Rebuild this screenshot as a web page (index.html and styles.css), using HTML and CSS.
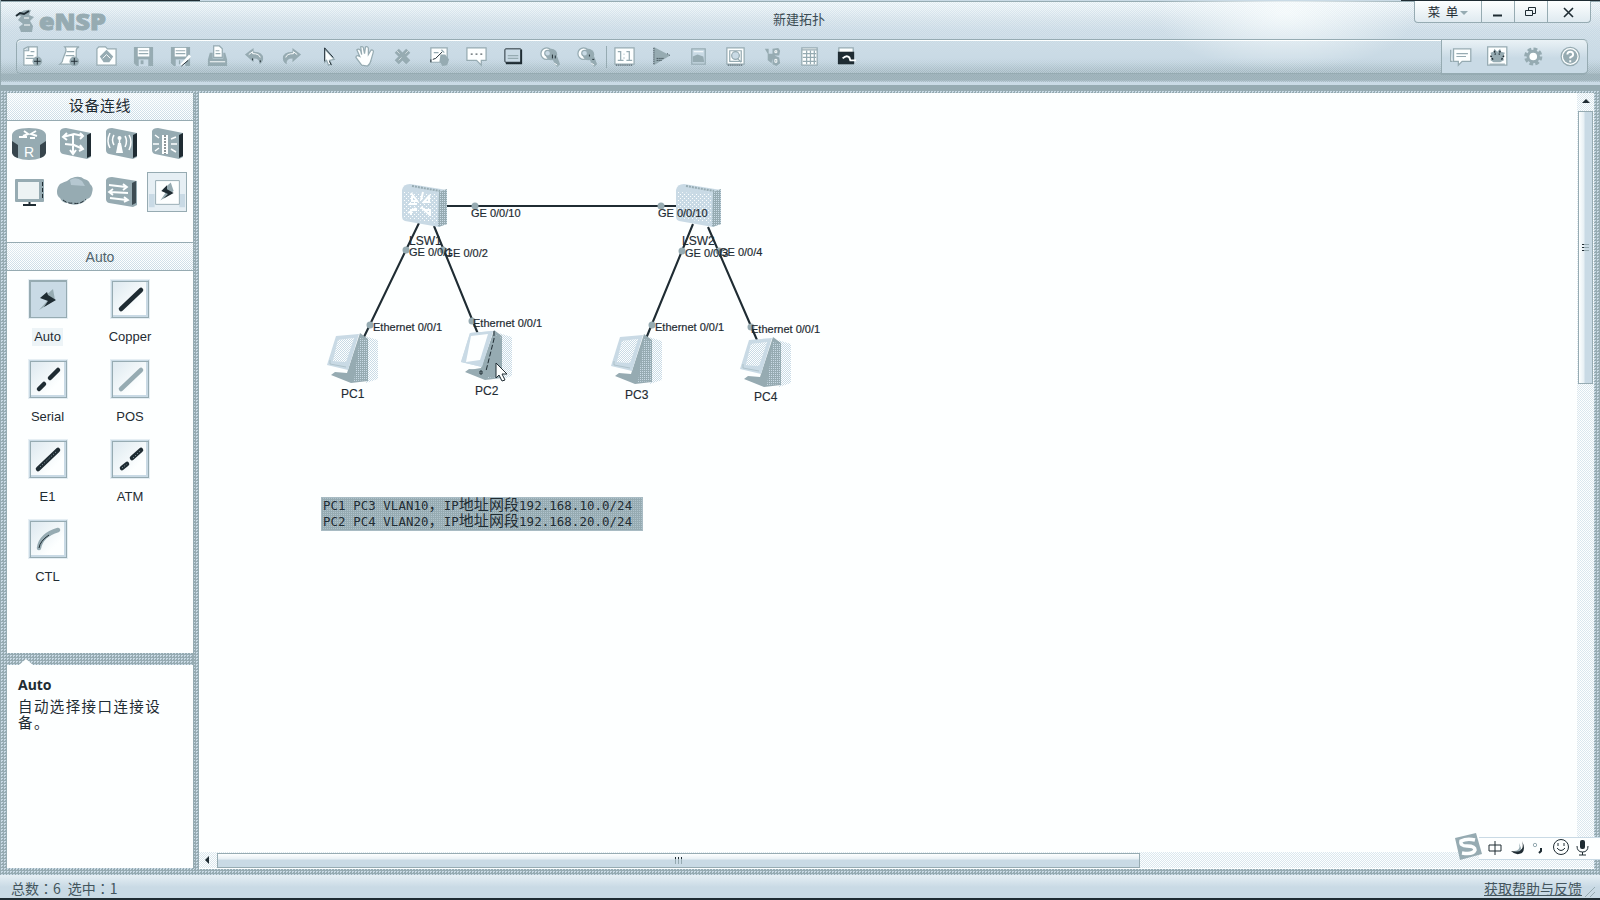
FILE: index.html
```html
<!DOCTYPE html>
<html lang="zh-CN">
<head>
<meta charset="utf-8">
<title>eNSP</title>
<link rel="stylesheet" href="styles.css">
</head>
<body>
<div class="app">
  <header class="header">
    <div class="titlebar">
      <svg class="logo" width="100" height="30" viewBox="0 0 100 30">
        <path class="m" d="M4 7q6-4 12-3l-2 5 5 2-4 4 3 5-1 6H6l-2-5 4-3-5-4 3-4-4-1z"/>
        <path class="lw" d="M9 12h5M9 19h6"/>
        <path class="ds" d="M1 10l4-3 4 1 5-3" stroke-width="2"/>
        <text x="24" y="24" textLength="67" lengthAdjust="spacingAndGlyphs">eNSP</text>
      </svg>
      <div class="title">新建拓扑</div>
      <div class="winctl">
        <div class="wc menu">菜&nbsp; 单<i class="caret"></i></div>
        <div class="wc"><svg width="14" height="14"><path class="ds" d="M2 10.500h9" stroke-width="2"/></svg></div>
        <div class="wc"><svg width="14" height="14"><path class="ds" d="M4.500 5.500v-3h7v6h-3M1.500 5.500h7v5h-7z"/></svg></div>
        <div class="wc last"><svg width="14" height="14"><path class="ds" d="M2 3l9 9M11 3l-9 9" stroke-width="1.600"/></svg></div>
      </div>
    </div>
    <div class="toolbar">
      <div class="tools">
        <svg viewBox="0 0 24 24"><path class="ms wf" d="M3 21V4l4-2h10v19zM3 6h5V2M6 11h7M5 14h9M10 7h4"/><circle class="m" cx="17" cy="17" r="5"/><path class="ds" d="M13.500 17h7M17 13.500v7"/></svg>
        <svg viewBox="0 0 24 24"><path class="ms wf" d="M7 2h15q-3 1-3 4v14H2q3-2 3-5l3-8q1-3-1-5zM9 7h8M8 11h9"/><circle class="m" cx="17" cy="17" r="5"/><path class="ds" d="M13.500 17h7M17 13.500v7"/></svg>
        <svg viewBox="0 0 24 24"><path class="ms wf" d="M2 4l2-2h7l2 2h9v17H2z"/><path class="m" d="M12 5l7 7-4 6H9l-4-6z"/><path class="lw" d="M8 14l4-4 4 4"/></svg>
        <svg viewBox="0 0 24 24"><path class="m" d="M2 2h20v20H5l-3-3z"/><path class="w" d="M6 3h12v9H6z"/><path class="l" d="M7 15h10v7H7z"/><path class="ms" d="M7 6h10M7 9h10"/><path class="m" d="M9 16h3v4H9z"/></svg>
        <svg viewBox="0 0 24 24"><path class="m" d="M2 2h20v20H5l-3-3z"/><path class="w" d="M6 3h12v9H6z"/><path class="l" d="M7 15h10v7H7z"/><path class="ms" d="M7 6h10M7 9h10M11 16v4"/><path d="M22 11l-9 10" stroke="#fdffff" stroke-width="3"/><path class="ds" d="M20 16l-7 6"/></svg>
        <svg viewBox="0 0 24 24"><path class="ms wf" d="M8 1h6l3 3v9H8zM10 6h4M10 9h5"/><path class="m" d="M4 8h3v6h11V8h2l2 7v7H2v-7z"/><path class="lw" d="M4 17.500h16"/></svg>
        <svg viewBox="0 0 24 24"><path class="m" d="M2 10l9-7v4q10 0 10 7 0 4-4 6 1-6-6-6v4z"/><path class="lw" d="M6 10l4-3v2q7 0 8 4"/><path class="ds" d="M10 14v2M18 16v2"/></svg>
        <svg viewBox="0 0 24 24"><path class="m" d="M22 10l-9-7v4Q3 7 3 14q0 4 4 6-1-6 6-6v4z"/><path class="lw" d="M18 10l-4-3v2q-7 0-8 4"/></svg>
        <svg viewBox="0 0 24 24"><path class="ms wf" d="M8 4l10 11-5 1 2 4-3 1-2-5-2 2z"/><path class="ds" d="M8 17V3l9 10M13 17l2 4"/></svg>
        <svg viewBox="0 0 24 24"><path class="ms wf" d="M8 21l-6-8q0-3 4-1L3 5q2-2 4 1l1 4-1-8q3-1 3 2l1 5 1-7q3-1 3 2v6l3-5q3 0 2 3l-2 7q-1 5-4 7z"/></svg>
        <svg viewBox="0 0 24 24"><path d="M6 6l12 12M18 6L6 18" stroke="#96abb2" stroke-width="6"/><path class="lw" d="M6 6l3 3M18 6l-3 3M8 16l3-3" opacity=".6"/></svg>
        <svg viewBox="0 0 24 24"><path class="ms wf" d="M3 3h17v15H3z"/><path class="m" d="M13 10h5l4 5-2 6-5 1-3-5z"/><path class="ds" d="M5 15l3-1 7-7M3 15v3"/><path class="ms" stroke-width="2" d="M6 8h5M14 5l3 3"/></svg>
        <svg viewBox="0 0 24 24"><path class="ms wf" d="M2 3h20v13h-5v5l-5-5H2z"/><path class="ds" d="M6 9.500h2M11 9.500h2M16 9.500h2"/></svg>
        <svg viewBox="0 0 24 24"><rect class="l dst" x="3" y="4" width="17" height="14" rx="1"/><path class="dk" d="M19 5h2v15H4v-2h15z"/><path class="ms" d="M6 11h11M6 14h11"/></svg>
        <svg viewBox="0 0 24 24"><circle class="ms wf" cx="8" cy="9" r="6"/><circle class="m" cx="13" cy="10" r="6"/><circle class="ms lf" cx="9" cy="8.500" r="3"/><path class="m" d="M13 12h6l3 8-3 3-3-4z"/><path class="lw" d="M16 19l3 2"/><path class="ds" d="M14 10v4M17 11v3"/></svg>
        <svg viewBox="0 0 24 24"><circle class="ms wf" cx="8" cy="9" r="6"/><circle class="m" cx="13" cy="10" r="6"/><circle class="ms lf" cx="9" cy="8.500" r="3"/><path class="m" d="M13 12h6l3 8-3 3-3-4z"/><path class="lw" d="M16 19l3 2"/><path class="ds" d="M14 10v2M17 15h2"/></svg>
        <svg class="sep" viewBox="0 0 24 24"><path class="ms wf" d="M2 3h20v17H2z"/><path class="ms" stroke-width="2" d="M5 7h3v9M5 16h6M14 7h3v9M14 16h6M11.500 9v1M11.500 13v1"/><path class="ds" stroke-dasharray="1 1" d="M3 21h18"/></svg>
        <svg viewBox="0 0 24 24"><path class="m" d="M4 2l17 9L4 21z"/><path class="ds" stroke-dasharray="1 1" d="M4 3v18M7 16h6M7 14h8M18 9l3 2"/></svg>
        <svg viewBox="0 0 24 24"><path class="ms lf" d="M5 4h14v16H5z"/><path class="m" d="M6 12l5-2 6 2 1 6H6z"/><path class="lw" d="M7 7h10"/></svg>
        <svg viewBox="0 0 24 24"><path class="ms wf" d="M3 3h18v17H3z"/><path class="ms" d="M6 6h12v11H6z"/><circle class="ms lf" cx="12" cy="11" r="4"/><path class="ms" stroke-width="2" d="M14 14l4 4"/><path class="ds" stroke-dasharray="1 1" d="M4 21h16"/></svg>
        <svg viewBox="0 0 24 24"><path class="m" d="M4 4h4v5h4V4l6-1 2 3-1 5h-5l5 2 1 6-4 3-4-2v-6l-1 5-4-3V9z"/><path class="lw" d="M14.500 6h2v2h-2zM14.500 15h2v3h-2z"/></svg>
        <svg viewBox="0 0 24 24"><path class="ms wf" d="M4 3h16v18H4z"/><path class="ms" d="M4 5h16M5 9h14M5 13h14M5 17h14M9 6v14M13 6v14M17 6v14"/></svg>
        <svg viewBox="0 0 24 24"><path class="ms wf" d="M4 3h15v17H4z"/><path class="dk" d="M3 7h17v13H3z"/><path d="M8 14q4-4 7-1l1 3h6" stroke="#fdffff" stroke-width="2"/></svg>
      </div>
      <div class="tools help">
        <svg viewBox="0 0 24 24"><path class="ms wf" d="M2 5v12h2M5 4h18v13H14l-4 4v-4H5zM8 9h12M8 12h10"/></svg>
        <svg viewBox="0 0 24 24"><path class="ms wf" d="M2 2h20v19H2z"/><path class="m" d="M5 8l3-1 1-3 3 3 3-3 1 3 4 1-2 4 1 4-4 2H8l-3-2 1-4z"/><path class="ds" stroke-width="1.500" stroke-dasharray="2 1" d="M5 11l3 5M9 6l1 4M15 6l-1 4M19 11l-3 5"/><path class="ms" stroke-width="2" d="M4 20h16"/></svg>
        <svg viewBox="0 0 24 24"><circle cx="12" cy="12" r="7" stroke="#96abb2" stroke-width="5" stroke-dasharray="3.500 2" fill="none"/><circle cx="12" cy="12" r="5.500" stroke="#96abb2" stroke-width="3" fill="#fdffff"/></svg>
        <svg viewBox="0 0 24 24"><circle class="ms wf" cx="12" cy="12" r="9.500"/><circle class="m" cx="12" cy="12" r="7.500"/><path d="M9 10q0-3 3-3t3 3q0 2-3 3v1M12 16v2" stroke="#fdffff" stroke-width="2"/></svg>
      </div>
    </div>
  </header>

  <main class="main">
    <aside class="side">
      <section class="palette">
        <h2 class="head cn">设备连线</h2>
        <div class="devices">
          <svg viewBox="0 0 40 40"><path class="m" d="M3 12Q4 5 20 5t17 7v18q-3 7-17 7T3 30z"/><path class="dk" d="M3 18l6 4v13q-5-1-6-5zM37 18l-6 4v13q5-1 6-5z" opacity=".8"/><path class="lw" stroke-width="2" d="M15 8l4 3-5 2M27 8l-5 3 6 2M10 14h8M21 15h5"/><text class="rl" x="15" y="34">R</text></svg>
          <svg viewBox="0 0 40 40"><path class="m" d="M5 8q1-3 6-3l25 5v24l-4 2-24-5q-3-1-3-4z"/><path class="dk" d="M32 12l4-2v23l-4 2z"/><path class="lw" stroke-width="2" d="M8 14l11-3 9 2M18 12v18M10 21l9 1 9 4M12 10l-4 4 4 3M25 10l3 3-3 3M15 27l3 4 3-4M25 22l3 4-4 2"/></svg>
          <svg viewBox="0 0 40 40"><path class="m" d="M5 8q1-3 6-3l25 5v24l-4 2-24-5q-3-1-3-4z"/><path class="dk" d="M32 12l4-2v23l-4 2z"/><path class="lw" stroke-width="1.500" d="M9 10q-4 8 0 15M13 12q-3 5 0 10M24 13q3 5 0 11M28 12q4 7 0 15M18.500 15v13"/><circle class="w" cx="18.500" cy="15" r="2"/><path class="w" d="M17 20h3l2 10h-7z"/></svg>
          <svg viewBox="0 0 40 40"><path class="m" d="M5 8q1-3 6-3l25 5v24l-4 2-24-5q-3-1-3-4z"/><path class="dk" d="M32 12l4-2v23l-4 2z"/><path class="w" d="M15 12h6v19h-6z"/><path class="ds" stroke-dasharray="2 1" d="M18 12v19"/><path class="lw" stroke-width="1.500" d="M8 12l4 3M6 21h6M8 28l4-3M24 16l5-2M24 21h6M24 26l5 3"/></svg>
          <svg viewBox="0 0 40 40"><rect class="m" x="6" y="7" width="29" height="23" rx="1"/><path class="w" d="M9 10h21v17H9z" opacity=".85"/><path class="ds" stroke-dasharray="4 2" d="M33.500 10v18"/><path class="ds" stroke-width="2" d="M14 33h13M20.500 30v3"/></svg>
          <svg viewBox="0 0 40 40"><path class="m" d="M2 20q0-5 3-8 4-2 7-3 3-3 8-4 6-1 9 2 5 1 6 5 4 3 2 9-1 5-5 6-3 4-8 5-6 2-11-1-6 0-8-5-3-2-3-6z"/><path class="l" d="M15 8q6-4 12 1l3 5-14-1z" opacity=".6"/><path class="ds" stroke-dasharray="4 2" d="M8 28q5 4 10 3 7 2 13-4"/></svg>
          <svg viewBox="0 0 40 40"><path class="m" d="M5 8q1-3 6-3l25 4v24l-4 2-24-4q-3-1-3-4z"/><path class="dk" d="M31 11l4-2v22l-4 2z" opacity=".75"/><path class="lw" stroke-width="1.800" d="M8 13l17 2M22 12l4 3-4 3M9 20l18 1M12 17l-4 3 4 3M9 26l17 2M23 25l4 3-4 2"/></svg>
          <svg class="chosen" viewBox="0 0 40 40"><path class="l" d="M1 22h6v14H1zM33 22h6v14h-6z"/><path class="ms wf" d="M8 8h25v25H8z"/><path class="m" d="M24 10l-8 7 3 3-6 9 6-4 8-6z"/><path class="dk" d="M20 13l-6 6 7 3-5 5 11-6-7-4z"/></svg>
        </div>
        <h2 class="head">Auto</h2>
        <div class="links">
          <div class="link on"><div class="tile"><svg viewBox="0 0 40 40"><path class="m" d="M25 10l-9 8 4 3-9 10 5-3 11-7z"/><path class="dk" d="M19 13l-7 6 8 3-4 6 12-7-8-5z"/></svg></div><span>Auto</span></div>
          <div class="link"><div class="tile"><svg viewBox="0 0 40 40"><path class="cable" d="M11 30L31 11"/></svg></div><span>Copper</span></div>
          <div class="link"><div class="tile"><svg viewBox="0 0 40 40"><path class="cable" d="M11 30l5-5M22 19l8-8"/></svg></div><span>Serial</span></div>
          <div class="link"><div class="tile"><svg viewBox="0 0 40 40"><path class="cable grey" d="M11 30L31 11"/></svg></div><span>POS</span></div>
          <div class="link"><div class="tile"><svg viewBox="0 0 40 40"><path class="cable" d="M10 30L30 11"/><path class="ms" stroke-dasharray="1 2" d="M12 28L29 12"/></svg></div><span>E1</span></div>
          <div class="link"><div class="tile"><svg viewBox="0 0 40 40"><path class="cable" d="M12 29l5-4M22 19l9-8"/><path class="ms" stroke-dasharray="1 2" d="M12 29l5-4M23 19l8-8"/></svg></div><span>ATM</span></div>
          <div class="link"><div class="tile"><svg viewBox="0 0 40 40"><path class="cable grey" d="M11 29Q13 16 30 11"/><path class="ds" d="M11 29q1-7 10-13"/></svg></div><span>CTL</span></div>
        </div>
      </section>
      <section class="info">
        <h3>Auto</h3>
        <p>自动选择接口连接设<br>备。</p>
      </section>
    </aside>

    <section class="stage">
      <div class="view">
        <svg class="topo" width="1378" height="759" viewBox="199 93 1378 759">
          <defs>
            <pattern id="dots" width="2" height="2" patternUnits="userSpaceOnUse"><path fill="#c9dae5" d="M0 0h1v1H0zM1 1h1v1H1z"/></pattern>
            <pattern id="dotw" width="4" height="4" patternUnits="userSpaceOnUse"><path fill="#fdffff" d="M0 0h1v1H0zM2 2h1v1H2z"/></pattern>
            <pattern id="dotl" width="2" height="2" patternUnits="userSpaceOnUse"><path fill="#c9dae5" d="M0 0h1v1H0z"/></pattern>
            <g id="pc">
              <path fill="url(#dots)" d="M365 336l13 4v39l-12 4z"/>
              <path class="m" d="M360 333l8 6v42l-17 2-20-8 4-3 12 1z"/>
              <path fill="url(#dotl)" d="M360 338l8 2v40l-14 1z"/>
              <path class="l" d="M336 336l23-2-11 36-21-5z"/>
              <path class="w" d="M338 340l16-2-8 24-13-1z"/>
              <path fill="url(#dots)" d="M338 340l16-2-8 24-13-1z"/>
              <path class="ms" d="M330 360v4l16 3" opacity=".5"/>
            </g>
            <g id="sw">
              <path class="l" d="M402 190q1-6 8-6l37 6v34l-8 3-34-6q-3-1-3-5z"/>
              <path class="m" d="M439 192l8-3v35l-9 3z"/>
              <path fill="url(#dotl)" d="M439 192l8-3v35l-9 3z"/>
              <path class="ms" d="M412 186l28 5" stroke-width="2" stroke-dasharray="2 1"/>
              <path fill="url(#dotw)" d="M404 192l33 2v29l-33-5z"/>
            </g>
          </defs>
          <g class="wire"><path d="M446 206h230M419 223l-56 116M434 226l44 108M693 224l-48 117M708 227l49 113"/></g>
          <use href="#sw"/>
          <use href="#sw" x="274"/>
          <path class="lw" stroke-width="2" d="M411 193l7 9M409 204h8M430 195l-7 8M421 207l9 8M416 208l-8 5M421 200l2-8M412 196v5h5M429 196v6h-6M411 215v-5h6M430 216v-6h-6"/>
          <g class="m"><circle cx="475" cy="206" r="3.500"/><circle cx="661" cy="206" r="3.500"/><circle cx="406" cy="250" r="3.500"/><circle cx="443" cy="250" r="3.500"/><circle cx="370" cy="325" r="3.500"/><circle cx="472" cy="321" r="3.500"/><circle cx="682" cy="251" r="3.500"/><circle cx="719" cy="251" r="3.500"/><circle cx="652" cy="325" r="3.500"/><circle cx="751" cy="327" r="3.500"/></g>
          <use href="#pc"/><use href="#pc" x="134" y="-3"/><use href="#pc" x="284" y="1"/><use href="#pc" x="413" y="4"/>
          <path class="m" d="M493 335l9 3v36l-10 4-23-8 12-2z"/>
          <path class="l" d="M470 333l23-2-11 36-21-5z"/>
          <path class="w" d="M471 336l17-2-8 26-14 2z"/>
          <path class="ds" stroke-dasharray="5 2" d="M494 331v8l-8 32"/><path class="ds" d="M480 371h2v3h-2z"/>
          <g class="port">
            <text x="471" y="217">GE 0/0/10</text><text x="658" y="217">GE 0/0/10</text>
            <text x="409" y="256">GE 0/0/1</text><text x="444.500" y="257">GE 0/0/2</text>
            <text x="685" y="257">GE 0/0/3</text><text x="719" y="256">GE 0/0/4</text>
            <text x="373" y="331">Ethernet 0/0/1</text><text x="473" y="327">Ethernet 0/0/1</text>
            <text x="655" y="331">Ethernet 0/0/1</text><text x="751" y="333">Ethernet 0/0/1</text>
          </g>
          <g class="name">
            <text x="409" y="245">LSW1</text><text x="682" y="245">LSW2</text>
            <text x="341" y="398">PC1</text><text x="475" y="395">PC2</text><text x="625" y="399">PC3</text><text x="754" y="401">PC4</text>
          </g>
          <path class="w dst" d="M496 363v15l3-3 3 6 3-1-3-6h5z"/>
        </svg>
        <div class="note"><div>PC1 PC3 VLAN10<b>，</b>IP<b>地址网段</b>192.168.10.0/24</div><div>PC2 PC4 VLAN20<b>，</b>IP<b>地址网段</b>192.168.20.0/24</div></div>
      </div>
      <div class="vbar"><i class="up"></i><div class="vthumb"><i></i><i></i><i></i></div></div>
      <div class="hbar"><i class="lt"></i><div class="hthumb"><i></i><i></i><i></i></div></div>
    </section>
  </main>

  <footer class="status" lang="zh-TW">
    <div class="counts"><span>总数：</span><span>6</span><span class="sel">选中：</span><span>1</span></div>
    <a class="feedback">获取帮助与反馈</a>
    <svg class="grip" width="12" height="12"><path class="ms" d="M1 11L11 1M6 11l5-5"/></svg>
  </footer>

  <div class="ime">
    <svg width="145" height="30" viewBox="0 0 145 30">
      <path class="w" d="M24 4h121v23H24z"/><path stroke="#c9dae5" d="M24 4.500h121M24 26.500h121"/>
      <path class="m" d="M0 5l21-5 6 21-22 6z"/>
      <path d="M20 7q-8-2-14 1-1 5 6 5 8 0 8 4-2 5-13 3" stroke="#fdffff" stroke-width="3.500"/>
      <path class="ds" d="M34 12h12v6H34zM40 8v14"/>
      <path class="dk" d="M67 8q4 12-11 10 5 5 11 2 4-4 0-12z"/><path class="m" d="M64 10q2 8-5 8 7 2 7-3z"/>
      <circle class="ms" cx="80" cy="12" r="1.700"/><path class="ds" stroke-width="2" d="M86 15v3l-2 2"/>
      <circle class="dst" cx="106" cy="14" r="7.500" fill="none"/><path class="ds" d="M103 10v3M109 10v3M102 15q4 5 8 0"/>
      <rect class="dk" x="125" y="7" width="5" height="9" rx="2"/><path class="ds" d="M122 13q0 6 5.500 6t5.500-6M127.500 19v3M124 22h7"/>
    </svg>
  </div>
</div>
</body>
</html>
```
FILE: styles.css
```css
:root {
  --d: #1f2c33;
  --m: #96abb2;
  --l: #c9dae5;
  --w: #fdffff;
  --checker: conic-gradient(var(--w) 25%, transparent 0 50%, var(--w) 0 75%, transparent 0);
  --mdots: conic-gradient(var(--m) 25%, transparent 0 50%, var(--m) 0 75%, transparent 0);
}
* { box-sizing: border-box; }
body { margin: 0; overflow: hidden; color: var(--d); font-family: "Liberation Sans", "Noto Sans CJK SC", sans-serif; }
svg { fill: none; flex: none; display: block; }
.m { fill: var(--m); }
.l { fill: var(--l); }
.w, .wf { fill: var(--w); }
.lf { fill: var(--l); }
.dk { fill: var(--d); }
.ms { stroke: var(--m); }
.ds, .dst { stroke: var(--d); }
.lw { stroke: var(--w); }

.app { position: relative; width: 1600px; height: 900px; display: flex; flex-direction: column; background: var(--m); }

/* title and toolbar */
.header { position: relative; height: 85px; display: flex; flex-direction: column; background: radial-gradient(ellipse 130px 60px at 1285px 12px, #f2f8fa, transparent), linear-gradient(var(--m) 0 2px, #e2edf3 2px, #d2e0e9 18px, var(--l) 30px 62px, #b7c9d2 73px, #a3b7bf 74px 80px, var(--l) 82px); border-left: 1px solid var(--m); }
.header::before { content: ""; position: absolute; inset: 2px 0 auto; height: 62px; background: var(--checker) 0 0 / 2px 2px; -webkit-mask: linear-gradient(#000a, #0005 30%, #0000 90%); mask: linear-gradient(#000a, #0005 30%, #0000 90%); }
.header::after { content: ""; position: absolute; inset: auto 0 3px; height: 24px; background: var(--mdots) 0 0 / 2px 2px; -webkit-mask: linear-gradient(#0000, #0008 60%); mask: linear-gradient(#0000, #0008 60%); }
.titlebar { position: relative; z-index: 1; height: 39px; display: grid; grid-template-columns: 758px 1fr 186px; border-top: 1px solid; border-image: linear-gradient(90deg, var(--d) 12.500%, var(--l) 12.500% 87.500%, var(--d) 87.500%) 1; }
.logo { margin: 5px 0 0 14px; }
.logo text { fill: var(--m); font: 800 22px "Open Sans", sans-serif; stroke: var(--m); stroke-width: .9px; }
.title { padding: 8px 0 0 14px; font: 13px/19px "Noto Sans CJK SC", sans-serif; color: #3b4c54; }
.winctl { height: 22px; width: 177px; display: flex; border: 1px solid var(--m); border-top: 0; background: linear-gradient(var(--w), #dfeaf0); border-radius: 0 0 4px 4px; }
.wc { width: 33px; display: flex; align-items: center; justify-content: center; border-left: 1px solid var(--m); }
.wc.menu { width: 66px; border: 0; font: 12.500px/20px "Noto Sans CJK SC", sans-serif; white-space: pre; }
.wc.last { width: 43px; }
.caret { border: 4px solid transparent; border-top-color: var(--m); margin: 2px 0 0 2px; border-bottom: 0; }
.toolbar { position: relative; z-index: 1; height: 35px; margin: 0 12px 0 15px; display: flex; justify-content: space-between; border: 1px solid var(--m); border-right: 0; border-radius: 5px; box-shadow: inset 0 1px var(--w); }
.tools { display: flex; align-items: center; margin-left: 3px; }
.tools svg { width: 37px; height: 23px; }
.tools .ms { stroke-width: 1.300; }
.tools:first-child { margin-left: -3px; }
.tools .sep { background: linear-gradient(var(--m), var(--m)) 0 100% / 1px 22px no-repeat; }
.help { width: 147px; margin: 0; border: solid var(--m); border-width: 0 1px 2px 1px; border-radius: 0 5px 5px 0; background: linear-gradient(#eaf2f6, var(--l) 55%); height: 35px; }
.help svg { width: 36.500px; }

/* body */
.main { height: 790px; flex: none; display: flex; padding: 3px 6px 6px 7px; border-top: 5px solid var(--m); margin-bottom: -1px; background: conic-gradient(var(--l) 25%, transparent 0) 0 1px / 3px 3px, var(--m); }
.side { width: 186px; margin-right: 6px; display: flex; flex-direction: column; gap: 12px; box-shadow: 1px 0 var(--m), -1px 0 var(--m); }
.palette { height: 560px; background: var(--w); }
.head { margin: 0; height: 28px; border-bottom: 1px solid var(--m); background: var(--checker) 0 0 / 2px 2px, linear-gradient(#e6eff4, var(--l)); font: 14px/28px "Liberation Sans", sans-serif; text-align: center; color: #51646c; }
.head.cn { font: 15px/24px "Noto Sans CJK SC", sans-serif; color: var(--d); letter-spacing: .6px; }
.devices { height: 122px; border-bottom: 1px solid var(--m); display: grid; grid-template-columns: repeat(4, 46px); grid-auto-rows: 49px; align-content: start; }
.devices svg { width: 40px; height: 40px; margin: 2px auto auto 2px; }
.devices .chosen { border: 1px solid var(--m); background: #e6eff4; }
.rl { fill: var(--w); font: 14px "Liberation Sans", sans-serif; }
.links { display: grid; grid-template-columns: 81px 84px; grid-auto-rows: 80px; padding-top: 8px; }
.link { display: flex; flex-direction: column; align-items: center; font-size: 13px; line-height: 18px; gap: 9px; }
.tile { width: 40px; height: 40px; border: 2px solid; border-color: var(--l) var(--m) var(--m) var(--l); outline: 1px solid #e6eff4; outline-offset: -1px; background: linear-gradient(135deg, #dce8ef, var(--w) 70%); box-shadow: inset 1px 1px var(--m), inset -2px -2px var(--l); }
.tile svg { margin: -2px; width: 40px; height: 40px; }
.on .tile { background: var(--l); border-color: var(--m); }
.on span { background: #edf4f7; padding: 0 2px; }
.cable { stroke: var(--d); stroke-width: 4.500; stroke-linecap: round; }
.cable.grey { stroke: var(--m); }
.info { position: relative; height: 203px; background: var(--w); padding: 10px 11px; }
.info::before { content: ""; position: absolute; left: 12px; top: -6px; border: solid transparent; border-width: 0 7px 6px; border-bottom-color: var(--w); }
.info h3 { margin: 0; font: 700 14px/19px "Noto Sans", sans-serif; }
.info p { margin: 4px 0 0; font: 14.500px/16px "Noto Sans CJK SC", sans-serif; letter-spacing: 1.400px; white-space: nowrap; }

/* canvas */
.stage { flex: 1; display: grid; grid-template: 759px 16px / 1fr 17px; background: var(--w); }
.view { position: relative; }
.wire { stroke: var(--d); stroke-width: 2.100; }
.port text { fill: var(--d); stroke: var(--d); stroke-width: .2px; font: 11px "Liberation Sans", sans-serif; }
.name text { fill: var(--d); stroke: var(--d); stroke-width: .15px; font: 12px "Liberation Sans", sans-serif; }
.note { position: absolute; left: 122px; top: 404px; width: 322px; height: 34px; padding: 0 1px; background: conic-gradient(#b0c3cc 25%, transparent 0) 0 0 / 2px 2px, var(--m); font: 12.400px/16px "DejaVu Sans Mono", monospace; letter-spacing: .08px; white-space: pre; border: 1px solid #a8bbc3; }
.note div { height: 16px; margin-top: -2px; margin-bottom: 2px; }
.note b { font: 15px/16px "Noto Sans CJK SC", sans-serif; }
.vbar, .hbar { background: var(--checker) 0 0 / 2px 2px, #dbe7ee; }
.vbar { display: flex; flex-direction: column; align-items: center; }
.up { border: 4px solid transparent; border-top: 0; border-bottom-color: var(--d); margin: 6px 0 8px; }
.vthumb { width: 15px; height: 273px; border: 1px solid var(--m); background: linear-gradient(90deg, var(--w), #e6eff4 40%, var(--l) 45%); display: flex; flex-direction: column; align-items: center; justify-content: center; gap: 2px; }
.vthumb i { width: 7px; height: 1px; background: var(--m); border-left: 2px solid var(--d); }
.hbar { grid-column: 1 / 3; display: flex; align-items: center; }
.lt { border: 4px solid transparent; border-left: 0; border-right-color: var(--d); margin: 0 8px 0 6px; }
.hthumb { width: 923px; height: 15px; border: 1px solid var(--m); background: linear-gradient(var(--w), #e6eff4 40%, var(--l) 45%); display: flex; align-items: center; justify-content: center; gap: 2px; }
.hthumb i { height: 7px; width: 1px; background: var(--m); border-top: 2px solid var(--d); }

/* status */
.status { flex: 1; margin-top: 1px; display: flex; align-items: center; padding: 2px 4px 0 11px; border-bottom: 2px solid var(--d); background: linear-gradient(#e6eff4, var(--l) 12px); font: 14px/20px "Noto Sans CJK TC", sans-serif; color: #43555d; }
.counts { flex: 1; display: flex; }
.sel { margin-left: 7px; }
.feedback { text-decoration: underline; margin-right: 2px; }
.grip { align-self: flex-end; }
.ime { position: absolute; left: 1455px; top: 833px; }
```
